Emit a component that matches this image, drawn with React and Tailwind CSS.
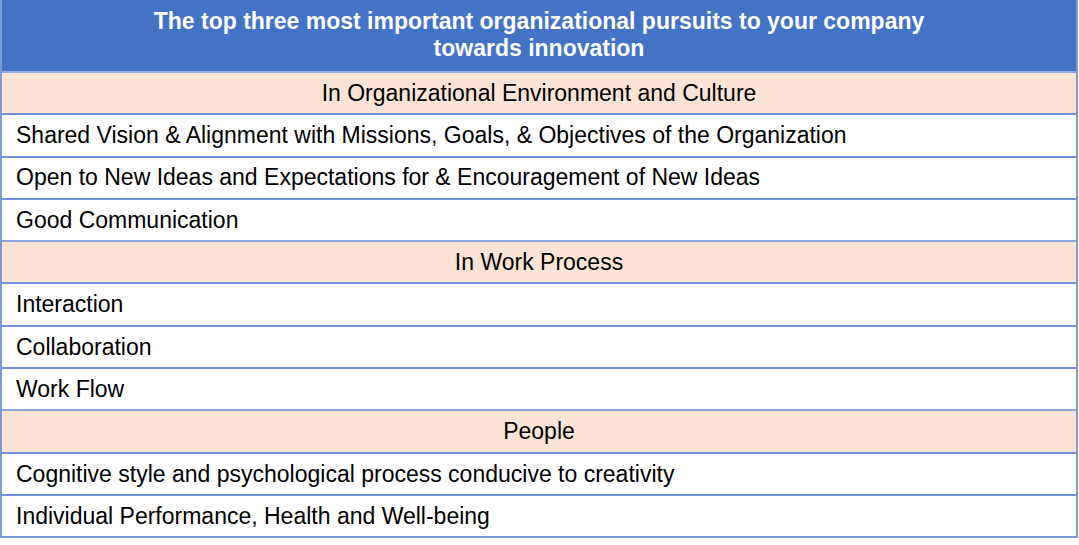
const sections = [
  {
    title: 'In Organizational Environment and Culture',
    items: [
      'Shared Vision & Alignment with Missions, Goals, & Objectives of the Organization',
      'Open to New Ideas and Expectations for & Encouragement of New Ideas',
      'Good Communication',
    ],
  },
  {
    title: 'In Work Process',
    items: ['Interaction', 'Collaboration', 'Work Flow'],
  },
  {
    title: 'People',
    items: [
      'Cognitive style and psychological process conducive to creativity',
      'Individual Performance, Health and Well-being',
    ],
  },
];

export default function App() {
  return (
    <div className="w-[1079px] h-[545px] bg-white" style={{ fontFamily: '"Liberation Sans", Arial, sans-serif' }}>
      <div className="w-[1078px] border-l-2 border-r-2 border-b-2 border-[#7b9ad8]">
        <div className="h-[71px] bg-[#4472c4] flex items-center justify-center text-center text-white font-bold text-[23px] leading-[27px] pb-[1px]">
          The top three most important organizational pursuits to your company
          <br />
          towards innovation
        </div>
        {sections.map((sec) => (
          <div key={sec.title}>
            <div className="h-[42.3px] bg-[#fbe4d6] border-t-2 border-[#8fa9de] flex items-center justify-center text-[23px] text-black">
              {sec.title}
            </div>
            {sec.items.map((item) => (
              <div key={item} className="h-[42.3px] border-t-2 border-[#6f92d6] flex items-center pl-[14px] text-[23px] text-black">
                {item}
              </div>
            ))}
          </div>
        ))}
      </div>
    </div>
  );
}
